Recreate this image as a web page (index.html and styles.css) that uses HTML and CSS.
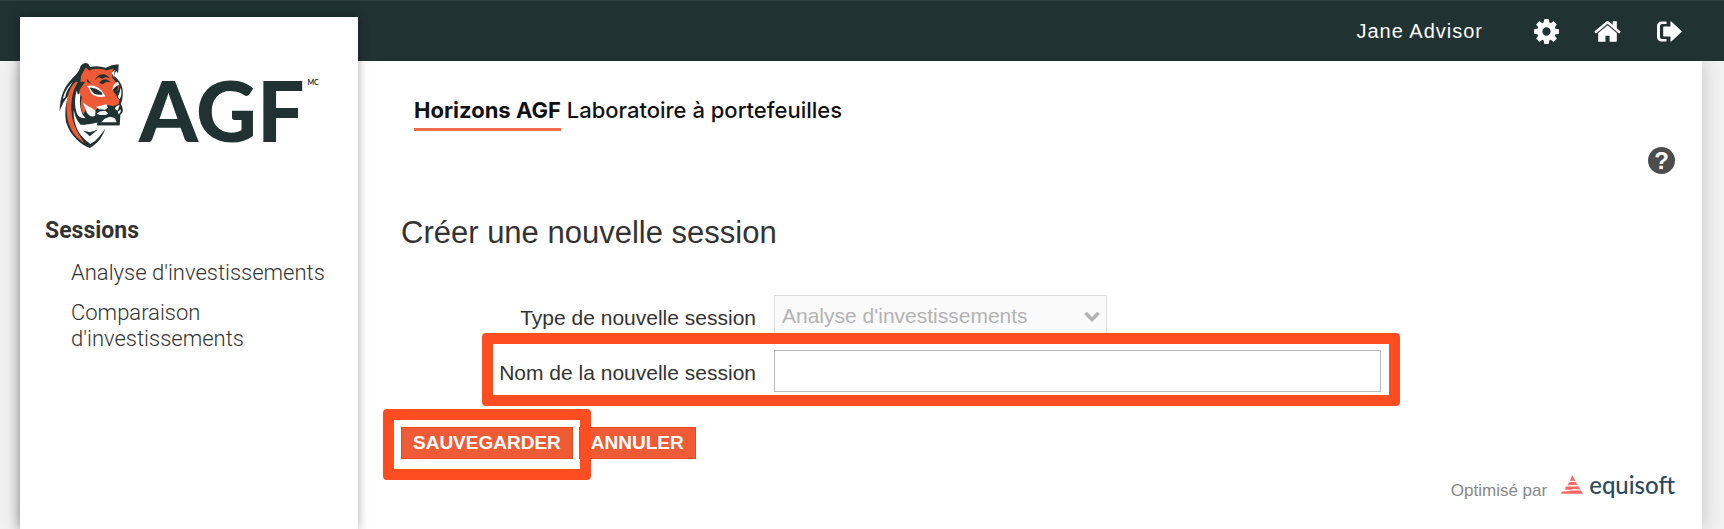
FILE: index.html
```html
<!DOCTYPE html>
<html lang="fr">
<head>
<meta charset="utf-8">
<title>Horizons AGF Laboratoire à portefeuilles</title>
<link rel="stylesheet" href="styles.css">
</head>
<body>
<header class="topbar">
  <span class="user">Jane Advisor</span>
  <nav class="tools" aria-label="Outils">
    <a href="#" aria-label="Paramètres"><svg class="icon" viewBox="0 0 1792 1792"><path d="M1152 896q0-106-75-181t-181-75-181 75-75 181 75 181 181 75 181-75 75-181zm512-109v222q0 12-8 23t-20 13l-185 28q-19 54-39 91 35 50 107 138 10 12 10 25t-9 23q-27 37-99 108t-94 71q-12 0-26-9l-138-108q-44 23-91 38-16 136-29 186-7 28-36 28h-222q-14 0-24.500-8.500t-11.500-21.500l-28-184q-49-16-90-37l-141 107q-10 9-25 9-14 0-25-11-126-114-165-168-7-10-7-23 0-12 8-23 15-21 51-66.500t54-70.500q-27-50-41-99l-183-27q-13-2-21-12.500t-8-23.500v-222q0-12 8-23t19-13l186-28q14-46 39-92-40-57-107-138-10-12-10-24 0-10 9-23 26-36 98.500-107.500t94.500-71.500q13 0 26 10l138 107q44-23 91-38 16-136 29-186 7-28 36-28h222q14 0 24.500 8.500t11.500 21.500l28 184q49 16 90 37l142-107q9-9 24-9 13 0 25 10 129 119 165 170 7 8 7 22 0 12-8 23-15 21-51 66.500t-54 70.500q26 50 41 98l183 28q13 2 21 12.500t8 23.500z"/></svg></a>
    <a href="#" aria-label="Accueil"><svg class="icon" viewBox="0 0 1792 1792"><path d="M1472 992v480q0 26-19 45t-45 19h-384v-384h-256v384h-384q-26 0-45-19t-19-45v-480q0-1 .5-3t.5-3l575-474 575 474q1 2 1 6zm223-69l-62 74q-8 9-21 11h-3q-13 0-21-7l-692-577-692 577q-12 8-24 7-13-2-21-11l-62-74q-8-10-7-23.500t11-21.500l719-599q32-26 76-26t76 26l244 204v-195q0-14 9-23t23-9h192q14 0 23 9t9 23v408l219 182q10 8 11 21.500t-7 23.500z"/></svg></a>
    <a href="#" aria-label="Déconnexion"><svg class="icon" viewBox="0 0 29 29"><path d="M12.500 4.500H7.500a4.500 4.500 0 0 0-4.500 4.500v11a4.500 4.500 0 0 0 4.500 4.500h5v-2.600H8a2 2 0 0 1-2-2V9.100a2 2 0 0 1 2-2h4.500z"/><path d="M10 9.500h6.500V5.100q0-1.400 1.100-.4l9.900 9.200q.6.600 0 1.200l-9.900 9.200q-1.100 1-1.100-.4v-4.400H10q-.8 0-.8-.8v-8.400q0-.8.800-.8z"/></svg></a>
  </nav>
</header>
<div class="page">
  <aside class="sidebar">
    <a class="brand" href="#" aria-label="AGF">
      <svg class="tiger" viewBox="28 20 192 256">
        <path fill="#203232" d="M29 167C30 128 40 96 64 72C78 57 88 50 91 33Q101 19 114 25L120 35Q142 29 166 37Q184 28 205 27L203 54L198 46C194 51 191 57 192 62C204 72 213 84 216 98C219 116 216 134 211 145C216 153 219 163 216 170L210 177L208 208H139L144 196H94L108 207C86 209 77 190 71 163C69 208 88 242 119 262C139 250 153 237 165 218C155 249 139 264 119 276C91 266 62 240 50 204C43 181 45 145 56 119C42 135 35 150 29 167Z"/>
        <path fill="#ed5a35" d="M78 78C53 98 47 139 51 178C55 220 78 246 103 262C86 235 66 207 64 163C63 128 70 98 84 80Z"/>
        <path fill="#fff" d="M39 130C42 112 54 90 68 80C57 95 48 108 45 126Z"/>
        <path fill="#fff" d="M80 104C73 128 73 151 80 172C83 182 92 188 106 187L98 177C88 156 88 133 92 111L83 117Z"/>
        <path fill="#ed5a35" d="M93 61L105 39C109 35 112 42 119 45C139 36 161 42 168 45L190 39L185 55L186 67L197 80L207 91L204 104L194 111L202 128L207 134L205 145L190 152L173 148L155 151L143 156L132 169L120 169L109 159L99 176C91 157 90 139 96 124L87 111C90 96 100 88 105 79L91 79Z"/>
        <path fill="#fff" d="M111 93C126 84 152 93 165 122C151 127 135 122 126 116C119 109 121 101 111 93ZM187 106C185 91 194 83 203 79L207 88C200 90 191 98 187 106ZM202 123C207 115 210 104 211 95C215 110 213 125 207 131Z"/>
        <path fill="#203232" d="M119 97C133 97 149 103 158 116C143 120 129 116 124 105ZM187 104C190 97 198 91 204 90L203 101L198 108L203 122L193 112ZM133 74C140 62 148 57 155 57C166 55 171 61 179 69L166 65L156 70L145 65ZM146 82Q158 70 169 72L183 81L169 79L157 86ZM109 69L124 85L112 80Z"/>
        <path fill="#fff" d="M184 53L194 43L191 54L192 67ZM110 170L98 139Q113 153 125 157L136 166L135 179Q122 188 110 170ZM137 154L168 146L176 154L164 162L147 161ZM174 162L195 153L208 147L202 164L188 158ZM148 167L165 165L174 173L166 178H148L139 174ZM202 168L211 161L211 168L205 176Z"/>
        <path fill="#203232" d="M169 149L187 154L199 149L192 162L176 161ZM143 177L168 180L177 167L190 165L204 177L206 208H142Z"/>
        <path fill="#fff" d="M152 199Q159 194 163 189L179 183L193 187L199 199Z"/>
        <path fill="#203232" d="M83 194L140 193L144 200Q115 207 91 207Z"/>
        <path fill="#fff" d="M85 210Q97 219 107 220L98 223L118 241L144 223L137 219Q153 217 164 211Q149 251 120 264Q95 239 85 210Z"/>
        <path fill="#203232" d="M99 224L119 229L142 222L119 241Z"/>
      </svg>
      <span class="wordmark">AGF</span><sup class="mark">MC</sup>
    </a>
    <nav class="menu">
      <h2>Sessions</h2>
      <ul>
        <li><a href="#">Analyse d'investissements</a></li>
        <li><a href="#">Comparaison d'investissements</a></li>
      </ul>
    </nav>
  </aside>
  <main class="content">
    <p class="product"><strong>Horizons AGF</strong> Laboratoire à portefeuilles</p>
    <button class="help" type="button" aria-label="Aide">?</button>
    <h1>Créer une nouvelle session</h1>
    <form>
      <div class="row">
        <label for="type">Type de nouvelle session</label>
        <div class="select">
          <select id="type" disabled><option>Analyse d'investissements</option></select>
          <svg class="chevron" viewBox="0 0 16 11"><path d="M1.500 2L8 8.500L14.500 2" fill="none" stroke="#b3b3b3" stroke-width="3.600"/></svg>
        </div>
      </div>
      <div class="row">
        <label for="name">Nom de la nouvelle session</label>
        <input id="name" type="text">
        <span class="highlight field-mark"></span>
      </div>
      <div class="actions">
        <div class="save"><button type="submit">SAUVEGARDER</button><span class="highlight save-mark"></span></div>
        <button type="button">ANNULER</button>
      </div>
    </form>
    <footer class="footer">
      <span class="credit">Optimisé par</span>
      <a href="#" class="equisoft">
        <svg class="peak" viewBox="0 0 22 19"><path fill="#ff675f" d="M11 0L14.500 6Q12 5.500 9 6ZM8.500 7H14.800L16.500 10Q12 9.500 6.500 10.500ZM5 11.500H17.500L19.300 14.500Q13 13.500 9 14.700H4ZM1 16.500Q7 16.500 11 15.500H20L22 18.700H0Z"/></svg>
        <span>equisoft</span>
      </a>
    </footer>
  </main>
</div>
</body>
</html>
```
FILE: styles.css
```css
* { box-sizing: border-box; }
body {
  margin: 0;
  min-height: 100vh;
  display: flex;
  flex-direction: column;
  background: #f2f2f2;
  color: #333;
  font-family: "Liberation Sans", Arial, sans-serif;
  font-size: 21px;
}
a { color: inherit; text-decoration: none; }
.topbar {
  height: 61px;
  padding: 0 41px 0 0;
  display: flex;
  justify-content: flex-end;
  align-items: center;
  gap: 49px;
  background: #203232;
  border-top: 1px solid #2c3f40;
  color: #fff;
  position: relative;
  z-index: 1;
}
.user { font-size: 20px; letter-spacing: 1px; }
.tools { display: flex; gap: 32px; }
.tools a { display: flex; }
.icon { width: 29px; height: 29px; fill: #fff; }
.page {
  flex: 1;
  display: flex;
  margin: 0 22px 0 20px;
  background: #fff;
  box-shadow: 0 0 20px rgba(0, 0, 0, 0.2);
}
.sidebar {
  width: 338px;
  flex: none;
  margin-top: -44px;
  background: #fff;
  box-shadow: 0 0 10px rgba(0, 0, 0, 0.35);
  position: relative;
  z-index: 2;
}
.brand {
  display: flex;
  align-items: flex-start;
  padding: 45px 0 0 39px;
  color: #203232;
}
.tiger { width: 65px; height: 86px; }
.wordmark {
  margin-left: 15px;
  font: 900 84px/96px Lato, sans-serif;
}
.mark { margin: 15px 0 0 3px; font: 700 7px/10px Lato, sans-serif; }
.menu { padding: 60px 20px 0 25px; font-family: Roboto, sans-serif; }
.menu h2 { margin: 0; font-size: 23px; line-height: 26px; font-weight: 700; }
.menu ul { margin: 16px 0 0; padding: 0 0 0 26px; list-style: none; }
.menu li { margin-bottom: 14px; font-size: 22px; line-height: 26px; font-weight: 300; }
.content { flex: 1; padding: 35px 27px 20px 43px; }
.product {
  margin: 0 0 0 13px;
  font: 500 22px/28px Inter, sans-serif;
  color: #111;
}
.product strong {
  display: inline-block;
  padding-bottom: 4px;
  border-bottom: 3px solid #f26a4c;
  font-weight: 700;
}
.help {
  display: block;
  width: 27px;
  height: 27px;
  margin: 16px 0 0 auto;
  padding: 0;
  border: 0;
  border-radius: 50%;
  background: #4d4d4d;
  color: #fff;
  font: 700 24px/27px "Liberation Sans", Arial, sans-serif;
}
h1 { margin: 41px 0 0; font-size: 31px; line-height: 36px; font-weight: 400; }
form { margin-top: 44px; }
.row {
  display: flex;
  align-items: center;
  margin-bottom: 13px;
  position: relative;
}
.row label { width: 355px; margin-right: 18px; padding-top: 3px; text-align: right; }
.select { position: relative; width: 333px; }
select, input {
  height: 42px;
  border: 1px solid #bbb;
  border-radius: 0;
  background: #fff;
  font: 21px "Liberation Sans", Arial, sans-serif;
}
select {
  appearance: none;
  width: 100%;
  padding: 0 7px 2px;
  border-color: #ddd;
  background: #fafafa;
  color: #b3b3b3;
  opacity: 1;
}
.chevron { position: absolute; right: 7px; top: 16px; width: 16px; height: 11px; }
input { width: 607px; padding: 0 7px; }
.highlight {
  position: absolute;
  border: 11px solid #ff4d22;
  border-radius: 4px;
  pointer-events: none;
}
.field-mark { left: 81px; top: -17px; width: 918px; height: 73px; }
.actions { display: flex; gap: 6px; margin-top: 35px; }
.save { position: relative; }
.save-mark { inset: -18px -18px -21px -18px; }
.actions button {
  height: 32px;
  padding: 0 11px;
  border: 1px solid #e8481f;
  background: #ee5b35;
  color: #fff;
  font: 700 19px/30px "Liberation Sans", Arial, sans-serif;
}
.footer {
  display: flex;
  justify-content: flex-end;
  align-items: flex-end;
  gap: 14px;
  margin-top: 12px;
  color: #888;
  font-size: 17px;
}
.credit { line-height: 20px; }
.equisoft {
  display: flex;
  align-items: baseline;
  gap: 6px;
  padding-bottom: 2px;
  color: #2c4a5e;
  font: 500 24px/28px Lato, sans-serif;
}
.peak { width: 22px; height: 19px; }
```
